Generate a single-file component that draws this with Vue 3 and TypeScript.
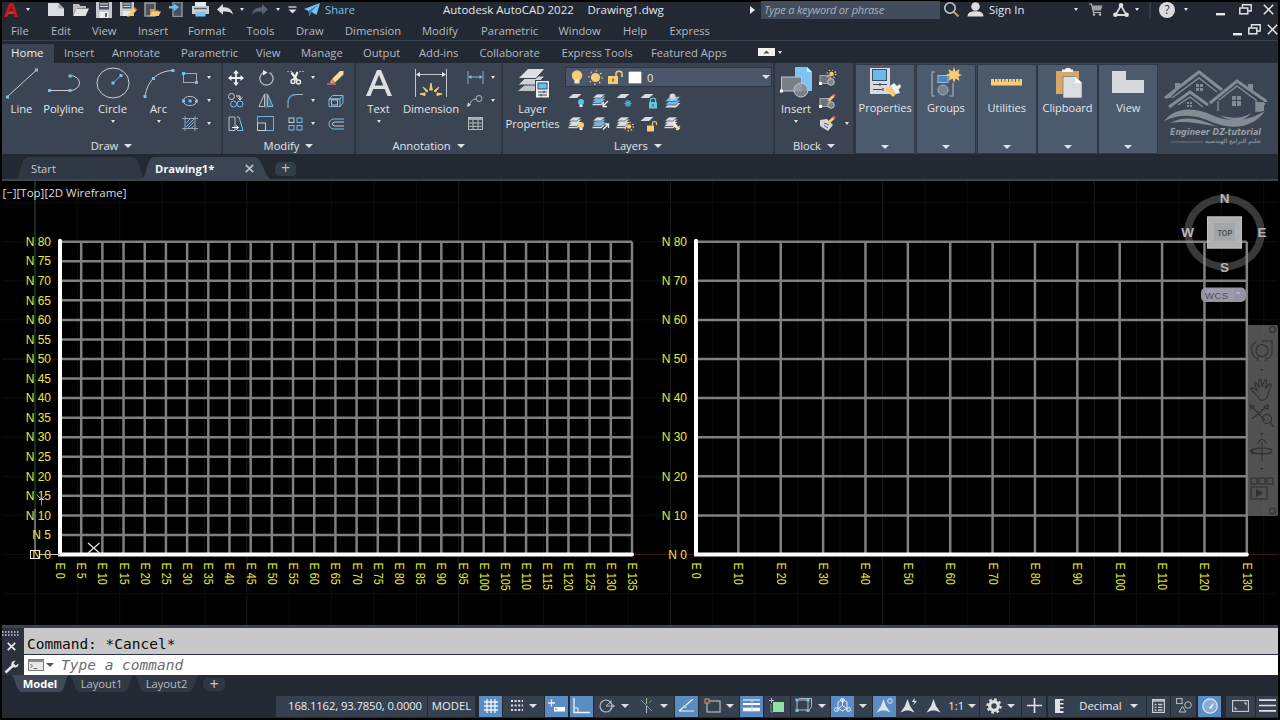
<script setup lang="ts">
import { computed } from "vue";

interface Cell {
	icon?: string;
	text?: string;
	w: number;
	gap?: number;
	caret?: boolean;
	on?: boolean;
}

// [width, height, markup]
type Icon = [number, number, string];

const BLUE = "#79bde8";
const LIGHT = "#d9dbde";
const GOLD = "#f8cb74";

const dot = (x: number, y: number, c = BLUE) => `<rect x="${x - 1.5}" y="${y - 1.5}" width="3" height="3" fill="${c}"/>`;
const sheet = (y: number, c = LIGHT) => `<path d="M5 ${y}H13.5L9 ${y + 4}H.5Z" fill="${c}"/>`;
const sheets = (c = LIGHT) => sheet(6, c) + sheet(3.5, c) + `<path d="M5 1H13.5L9 5H.5Z" fill="${LIGHT}" stroke="#3b4453" stroke-width=".6"/><path d="M.5 11.5H9L12 9" fill="none" stroke="${LIGHT}" stroke-width="1.4"/>`;
const bulb = (x: number, y: number, c: string) => `<circle cx="${x}" cy="${y}" r="3" fill="${c}"/><rect x="${x - 1.5}" y="${y + 2.5}" width="3" height="2.5" fill="#f2f2f2"/>`;
const sun = (x: number, y: number, r: number) => `<circle cx="${x}" cy="${y}" r="${r}" fill="${GOLD}"/><circle cx="${x}" cy="${y}" r="${r + 2}" fill="none" stroke="${GOLD}" stroke-width="1.6" stroke-dasharray="1.2 ${((r + 2) * 0.785 - 1.2).toFixed(2)}"/>`;
const pencil = (x: number, y: number) => `<path d="M${x} ${y + 6}L${x + 5} ${y + 1}L${x + 7} ${y + 3}L${x + 2} ${y + 7.5}Z" fill="${GOLD}"/><path d="M${x + 5} ${y + 1}l1.5-1.3 2 2L${x + 7} ${y + 3}Z" fill="#e0604f"/>`;
const blockBase = `<rect x="1" y="5.5" width="10" height="8" fill="#6b727c" stroke="#a9adb3"/><circle cx="12" cy="12" r="3.3" fill="#7d838c" stroke="#c3c6ca"/>${dot(1.5, 13.5, "#fff")}`;
const compass = `<path d="M7.5 1L10 8L14.5 14.5L9.5 12.5H5.5L.5 14.5L5 8Z" fill="#dfe2e5"/>`;

const icons: Record<string, Icon> = {
	logo: [16, 16, `<path d="M0 15L5.2 1H9.5L14 15H10.6L9.6 12H4.7L3.4 15Z" fill="#c8171e"/><path d="M5.6 9.5L7.3 4.4L8.8 9.5Z" fill="#222933"/><path d="M0 15L6.5 9.5H9.6V12H5Z" fill="#ea2c30"/>`],
	doc: [16, 13, `<path d="M0 0H10.5L16 5.5V13H0Z" fill="#dcdde0"/><path d="M10.5 0V5.5H16Z" fill="#a3a7ad"/>`],
	folder: [17, 13, `<path d="M1 12V1H7L8.5 3H14V5H5Z" fill="#b9bcc1"/><path d="M1 13L4.5 5.5H17L13.5 13Z" fill="#e2e3e5"/>`],
	save: [16, 16, `<path d="M0 0H16V16H0Z" fill="#c5c8cc"/><rect x="3" width="10" height="7.5" fill="#4c545f"/><path d="M4 2H12M4 4.5H12" stroke="#dadcdf"/><rect x="3.5" y="10" width="9" height="6" fill="#f0f0f0"/><rect x="9" y="11" width="2" height="4" fill="#5b626c"/>`],
	saveas: [17, 16, `<path d="M0 0H14V14H0Z" fill="#c5c8cc"/><rect x="2.5" width="9" height="6.5" fill="#4c545f"/><path d="M3.5 2H10.5M3.5 4.5H10.5" stroke="#dadcdf"/><rect x="3" y="9" width="8" height="5" fill="#e8e8e8"/><path d="M7 15L9 11L14 6L16.5 8.5L11 14Z" fill="${GOLD}"/><path d="M14 6L15 5L17 7.5L16.5 8.5Z" fill="#e2654f"/>`],
	openweb: [17, 15, `<rect x="1" y="1" width="10" height="13" fill="#4a515d" stroke="#9b9fa7" stroke-width="1.5"/><path d="M6 14V7H10L11 8.5H15V14Z" fill="#c99b4d"/><path d="M6 14L8 9.5H17L14.5 14Z" fill="${GOLD}"/>`],
	saveweb: [14, 15, `<rect x="4" y="0" width="9" height="14.5" fill="#4a515d" stroke="#8d939c" stroke-width="1.5"/><path d="M0 4H5V1.5L10 5.3L5 9V6.6H0Z" fill="#6dbdf0"/>`],
	print: [17, 15, `<rect x="3" y="0" width="11" height="5" fill="#e5e6e8"/><rect y="4" width="17" height="8" fill="#c9ccd0"/><path d="M2 6.5H15" stroke="#59606b" stroke-width="1.4"/><rect x="3.5" y="9.5" width="10" height="5" fill="#7cc3f3"/>`],
	undo: [16, 11, `<path d="M0 5.5L6 0V3.3C11 3.3 15 5 16 10.5C13 7.5 11 7.3 6 7.5V10.8Z" fill="#dcdee1"/>`],
	redo: [16, 11, `<path d="M16 5.5L10 0V3.3C5 3.3 1 5 0 10.5C3 7.5 5 7.3 10 7.5V10.8Z" fill="#5a626e"/>`],
	custom: [9, 8, `<path d="M.5 1H8.5" stroke="#dcdee1" stroke-width="1.3"/><path d="M.5 3.5H8.5L4.5 7.5Z" fill="#dcdee1"/>`],
	plane: [16, 13, `<path d="M0 6L16 0L12.5 12L7.5 9L5.5 13L4.5 8Z" fill="#77c0f0"/><path d="M4.5 8L14 1.5L7.2 9L5.5 13" fill="#337fb5"/>`],
	play: [5, 8, `<path d="M0 0L5 4L0 8Z" fill="#e8eaec"/>`],
	search: [16, 15, `<circle cx="6" cy="6" r="5.2" fill="none" stroke="#c2c6cb" stroke-width="1.6"/><path d="M10 10L14.5 14.5" stroke="#c4a16a" stroke-width="2"/>`],
	user: [17, 15, `<circle cx="8.5" cy="4.5" r="4.3" fill="#dcdde0"/><path d="M.5 14.5C.5 10.5 4 9.3 8.5 9.3S16.5 10.5 16.5 14.5Z" fill="#dcdde0"/>`],
	cart: [14, 13, `<path d="M0 1H2.5L4.5 9.5H12" fill="none" stroke="#b9bdc3" stroke-width="1.2"/><path d="M3 2.5H13.5L12 7.5H4.3Z" fill="#9ba0a8"/><circle cx="5" cy="11.5" r="1.2" fill="#b9bdc3"/><circle cx="11" cy="11.5" r="1.2" fill="#b9bdc3"/>`],
	triangle: [16, 14, `<path d="M8 2.5L2.5 12H13.5Z" fill="none" stroke="#d6d8dc" stroke-width="1.8"/><circle cx="8" cy="2.2" r="2.2" fill="#e0e2e4"/><circle cx="2.3" cy="11.7" r="2.2" fill="#e0e2e4"/><circle cx="13.7" cy="11.7" r="2.2" fill="#e0e2e4"/>`],
	rule: [2, 16, `<path d="M1 0V16" stroke="#46505f"/>`],
	help: [16, 16, `<circle cx="8" cy="8" r="8" fill="#d9dbde"/><text x="8" y="12" text-anchor="middle" font-family="Open Sans, sans-serif" font-size="12" fill="#2a323e">?</text>`],
	min: [9, 12, `<rect y="9" width="9" height="2.4" fill="#e8eaec"/>`],
	restore: [13, 11, `<path d="M3.5 3.5V.8H12.2V7H9" fill="none" stroke="#e2e4e7" stroke-width="1.4"/><rect x=".8" y="4" width="8" height="5.8" fill="none" stroke="#e2e4e7" stroke-width="1.5"/>`],
	close: [11, 11, `<path d="M.8 .8L10.2 10.2M10.2 .8L.8 10.2" stroke="#e8eaec" stroke-width="1.5"/>`],
	gallery: [17, 8, `<rect width="17" height="8" fill="#f2f2f2"/><path d="M5.5 5.5L8.5 2.5L11.5 5.5Z" fill="#444b57"/>`],

	line: [34, 34, `<path d="M2 31L31.5 4" stroke="#c9ccd1"/>${dot(2.5, 31)}${dot(31.5, 4)}`],
	polyline: [34, 34, `<path d="M2 24.5H23A9.5 7.5 0 0 0 23 9.5" fill="none" stroke="#c9ccd1"/>${dot(2.5, 24.5)}${dot(23, 24.5)}${dot(23, 10)}`],
	circle: [34, 34, `<ellipse cx="17" cy="17" rx="16" ry="15" fill="none" stroke="#c9ccd1"/><path d="M17 17L25 9.5" stroke="#6fb1e0"/>${dot(17, 17)}${dot(25, 9.5)}`],
	arc: [34, 34, `<path d="M3 31C5 16 14 5 31 4.5" fill="none" stroke="#c9ccd1"/>${dot(3, 30.5)}${dot(11.5, 12.5)}${dot(31, 4.5)}`],
	rect: [16, 12, `<rect x="1.5" y="1.5" width="13" height="9" fill="none" stroke="#a5a9b0"/>${dot(1.5, 1.5)}${dot(14.5, 10.5)}`],
	ellipse: [16, 12, `<ellipse cx="8" cy="6" rx="6.8" ry="4.6" fill="none" stroke="#b9bdc3"/>${dot(8, 6)}${dot(1.5, 6)}${dot(14.5, 6)}`],
	hatch: [16, 15, `<path d="M3 0V15M13 0V15M0 2.5H16M0 12.5H16" stroke="#9ba1aa"/><path d="M4 7L8 3M4 11L12 3M6 12L12 6M9.5 12L12 9.5" stroke="${BLUE}"/>`],
	move: [16, 16, `<path d="M8 0L11 3.5H8.9V7.1H12.5V5L16 8L12.5 11V8.9H8.9V12.5H11L8 16L5 12.5H7.1V8.9H3.5V11L0 8L3.5 5V7.1H7.1V3.5H5Z" fill="#eef0f1"/>`],
	rotate: [16, 16, `<path d="M5 2.8A6.6 6.6 0 1 0 11.5 2.6" fill="none" stroke="#bfc3c8" stroke-width="1.2"/><path d="M5 0V5.5L9.5 2.5Z" fill="#eef0f1"/>`],
	trim: [17, 15, `<path d="M0 1.5H5M12 1.5H17" stroke="#9ba1aa" stroke-dasharray="2 1"/><path d="M4.5 2.5L10 10M10.5 2L8 8L6.5 9.5" stroke="#eef0f1" stroke-width="2.2" fill="none"/><circle cx="6" cy="11.5" r="2" fill="none" stroke="#eef0f1" stroke-width="1.4"/><circle cx="11.5" cy="12" r="2" fill="none" stroke="#eef0f1" stroke-width="1.4"/>`],
	erase: [17, 15, `<path d="M5 9L13 1L16.5 1V4.5L8 12.5Z" fill="#fbdb98"/><path d="M5 9L8 12.5L5.5 13.5L2.5 12.5Z" fill="#f08b7c"/><path d="M0 14H9" stroke="#ef8f7e"/>`],
	copy: [16, 15, `<circle cx="3.5" cy="3.5" r="3" fill="none" stroke="#c9ccd1"/><circle cx="5.5" cy="11" r="3" fill="none" stroke="${BLUE}"/><circle cx="12" cy="11" r="3" fill="none" stroke="${BLUE}"/><path d="M8 3H12V6M10 4.5L12 7L14 4.5" fill="none" stroke="#eee"/>`],
	mirror: [16, 15, `<path d="M6.5 1V13.5H1Z" fill="none" stroke="#b9bdc3"/><path d="M9.5 1V13.5H15Z" fill="#456a8a" stroke="${BLUE}"/><path d="M8 0V15" stroke="#8f959d"/>`],
	fillet: [16, 15, `<path d="M1 15V10C1 4 5 1.5 9 1.5H16" fill="none" stroke="#aeb2b9"/><path d="M1 9C1.5 4 5 1.5 9 1.5" fill="none" stroke="#5e9bca" stroke-width="1.3"/>`],
	explode: [16, 14, `<path d="M1 5L4.5 1.5H15L12 5ZM12 5V12.5M15 1.5V9L12 12.5H1V5H12" fill="none" stroke="${BLUE}"/><rect x="3.5" y="6" width="6" height="5" fill="none" stroke="#b9bdc3"/>`],
	stretch: [16, 16, `<path d="M1 1H7V14.5H1Z" fill="none" stroke="#b9bdc3"/><path d="M9 1H11L15 14.5H9" fill="none" stroke="${BLUE}"/><path d="M4 11.5H10M8 9.5L10.5 11.5L8 13.5" stroke="#fff" fill="none"/>`],
	scale: [17, 15, `<rect x=".5" y=".5" width="16" height="14" fill="none" stroke="#6faed9"/><rect x=".5" y="7" width="8" height="7.5" fill="none" stroke="#c9ccd1"/>`],
	array: [15, 14, `<rect x="1" y="1" width="5" height="4.5" fill="none" stroke="#c9ccd1"/><rect x="9" y="1" width="5" height="4.5" fill="none" stroke="${BLUE}"/><rect x="1" y="8.5" width="5" height="4.5" fill="none" stroke="${BLUE}"/><rect x="9" y="8.5" width="5" height="4.5" fill="none" stroke="${BLUE}"/>`],
	offset: [16, 12, `<path d="M16 1H6A5 5 0 0 0 6 11H16" fill="none" stroke="${BLUE}"/><path d="M16 4H6.5A2 2 0 0 0 6.5 8H16" fill="none" stroke="#c9ccd1"/>`],
	bigText: [28, 34, `<path d="M1 30L12 4H16L27 30H22.5L19.6 23H8.2L5.5 30ZM9.7 19.5H18.2L14 9Z" fill="#dcdee1" fill-rule="evenodd"/>`],
	dimension: [34, 34, `<path d="M1.5 3V31M32.5 3V31" stroke="#c2c5ca"/><path d="M3 8.5H31" stroke="#c2c5ca"/><path d="M2 8.5L6 6V11ZM32 8.5L28 6V11Z" fill="#e6e7e9"/><path d="M6 28L11 29.5V27ZM9 21L14 25L12.5 26ZM17 17L15.7 24H18.3ZM25 21L20 25L21.5 26ZM28 28L23 29.5V27Z" fill="${GOLD}" stroke="${GOLD}"/>`],
	linear: [17, 13, `<path d="M1 0V13M16 0V13" stroke="#9fa5ad"/><path d="M2 6H15" stroke="${BLUE}"/><path d="M1.5 6L4.5 4V8ZM15.5 6L12.5 4V8Z" fill="${BLUE}"/>`],
	leader: [16, 12, `<circle cx="12" cy="3.5" r="3" fill="none" stroke="#b5b9bf"/><path d="M9 4C6 4 5 5 2 10" fill="none" stroke="#b5b9bf"/><path d="M0 12L1 7.5L4 10Z" fill="#dcdee1"/>`],
	table: [15, 13, `<rect x=".5" y=".5" width="14" height="12" fill="none" stroke="#b5b9bf"/><rect x="1" y="1" width="13" height="2" fill="#a3a8af"/><path d="M1 6H14M1 9.3H14M5 3V12M10 3V12" stroke="#b5b9bf"/>`],
	layerProps: [36, 34, `<path d="M12 17H30L21 25H3Z" fill="#bfc2c7"/><path d="M12 10H30L21 19H3Z" fill="#cfd1d5" stroke="#3b4453"/><path d="M13 2.5H30L21 12.5H3Z" fill="#dddfe1" stroke="#3b4453"/><rect x="20.5" y="14.5" width="14" height="17.5" fill="#eceded" stroke="#3b4453"/><rect x="23" y="17" width="9" height="6" fill="#6cb9ee" stroke="#35516b"/><path d="M23 26H32M23 29H32M29 24.8V27.3M26 27.8V30.3" stroke="#3b4453"/>`],
	bulb: [12, 15, `<circle cx="6" cy="5.5" r="5.2" fill="${GOLD}"/><path d="M3.5 9.5H8.5V13.5H3.5Z" fill="#f4ead2"/>`],
	sun: [15, 15, sun(7.5, 7.5, 4.6)],
	unlock: [15, 14, `<rect y="6" width="10" height="8" fill="${GOLD}"/><path d="M8 6V3.5C8 .5 14 .5 14 3.5V7" fill="none" stroke="${GOLD}" stroke-width="1.5"/><path d="M5 8.5V11.5" stroke="#4a4436" stroke-width="1.3"/>`],
	swatch: [14, 13, `<rect width="14" height="13" fill="#fff" stroke="#222"/>`],
	layOff: [18, 16, sheet(1) + bulb(13, 9, "#58c5d8")],
	layIso: [18, 16, sheets("#70b6e6") + `<path d="M16 8L11 13M11 9.5V13.5H15" stroke="#e8eef2" stroke-width="1.3" fill="none"/>`],
	layFreeze: [18, 16, sheet(1) + `<path d="M12 7V14M8.5 10.5H15.5M9.5 8L14.5 13M14.5 8L9.5 13" stroke="#45b4bd" stroke-width="1.3"/>`],
	layLock: [18, 16, sheet(1) + `<rect x="9" y="9" width="8" height="6.5" fill="#62c8d8"/><path d="M10.5 9V7C10.5 4.5 15.5 4.5 15.5 7V9" fill="none" stroke="#62c8d8" stroke-width="1.3"/><path d="M13 11V13.5" stroke="#2c5862"/>`],
	layMatch: [18, 16, `<path d="M6 10H16.5L12 14.5H1Z" fill="#dadcdf"/><path d="M6 7H16.5L12 12H1Z" fill="#70b6e6" stroke="#3b4453" stroke-width=".6"/><path d="M6 3.5H16.5L12 8.5H1Z" fill="#8ac4ee" stroke="#3b4453" stroke-width=".6"/><circle cx="8.5" cy="3.5" r="3" fill="#d5d8dc"/>`],
	layOn: [18, 16, sheets() + bulb(13, 9, GOLD)],
	layUniso: [18, 16, sheets("#70b6e6") + `<path d="M11 13.5L16 8.5M12.5 8H16.5V12" stroke="#e8eef2" stroke-width="1.3" fill="none"/>`],
	layThaw: [18, 16, sheets() + sun(13, 10.5, 2.3)],
	layUnlock: [18, 16, sheet(1) + `<rect x="7" y="9.5" width="7" height="6" fill="${GOLD}"/><path d="M12.5 9.5V7C12.5 5 16.5 5 16.5 7V9" fill="none" stroke="${GOLD}" stroke-width="1.2"/>`],
	layPrev: [18, 16, sheets() + `<path d="M9 7L15 13.5" stroke="#f4ead2" stroke-width="3"/><path d="M12 14L16 10" stroke="${GOLD}" stroke-width="1.5"/>`],
	insert: [34, 34, `<path d="M16 1H28L33 6V25H16Z" fill="#7cc4f6"/><path d="M28 1V6H33Z" fill="#d5ebfa"/><rect x="2.5" y="11" width="20" height="14" fill="#7a7f87" stroke="#c2c4c8"/><circle cx="22" cy="24" r="7" fill="#858a92" fill-opacity=".85" stroke="#c9cbcf"/><path d="M15 24A7 7 0 0 1 22.5 17V25H15Z" fill="#a3a7ac" opacity=".6"/>${dot(2.5, 25, "#fff")}`],
	blkNew: [18, 16, blockBase + sun(12.5, 4, 2.2)],
	blkEdit: [18, 16, blockBase + pencil(8.5, 1)],
	blkAttr: [18, 16, `<path d="M1 4L8 3L14 9L9 15L1 10Z" fill="#d4d6da"/><path d="M5 7L10 9M5 9.5L9 12" stroke="#555c67"/>${pencil(8.5, 0)}`],
	properties: [34, 34, `<rect x="2" y="2" width="20" height="26" fill="#d9dadd"/><rect x="4.5" y="3.5" width="14" height="11" fill="#6eb8ec" stroke="#35516b"/><path d="M5 18.5H19M5 23.5H14M12 17V20M15 22V25" stroke="#454c57" stroke-width="1.2"/><path d="M17 23L22 20L28 28L25 31Z" fill="${GOLD}"/><path d="M22 20L26 17L29 20L32 18L33 21L30.5 23.5L32 27L28 28Z" fill="#f0f0f0"/>`],
	groups: [34, 34, `<path d="M6 6H3V30H6M20 30H24V17" fill="none" stroke="#a9aeb5" stroke-width="1.2"/><rect x="9" y="9.5" width="10" height="7" fill="#4a86b8" stroke="#8cc0e6"/><circle cx="14" cy="24" r="5" fill="#79808a" stroke="#a9aeb5"/><path d="M25 1L26.5 5.5L30.5 3L29.5 7.5L33 9L29.5 10.5L30.5 15L26.5 12.5L25 17L23.5 12.5L19.5 15L20.5 10.5L16.5 9L20.5 7.5L19.5 3L23.5 5.5Z" fill="${GOLD}"/>`],
	utilities: [34, 34, `<rect x="1" y="13" width="31" height="6.5" fill="#f6cf7d"/><path d="M4.5 13V16M8 13V15.5M11.5 13V16M15 13V15.5M18.5 13V16M22 13V15.5M25.5 13V16M29 13V15.5" stroke="#74623c"/>`],
	clipboard: [34, 34, `<rect x="5" y="5" width="23" height="23" fill="#d9a869"/><path d="M11 5V3.5H14C14 1.5 20 1.5 20 3.5H22V6H11Z" fill="#f3f3f3"/><path d="M12 10.5H24L31 17V32H12Z" fill="#dcdddf" stroke="#5b6676" stroke-width=".6"/><path d="M24 10.5V17H31Z" fill="#fff"/>`],
	view: [34, 34, `<path d="M1 5H15V14H33V27H1Z" fill="#d8d9dc"/>`],

	prompt: [16, 12, `<rect x=".5" y=".5" width="15" height="11" fill="#e7e7e7" stroke="#7b7b7b"/><rect x="1" y="1" width="14" height="2" fill="#8a8a8a"/><path d="M2.5 5L4.5 7L2.5 9M5.5 9.5H9" fill="none" stroke="#666"/>`],
	grip: [18, 5, `<path d="M0 1H18M0 4H18" stroke="#cfd2d6" stroke-width="1.5" stroke-dasharray="1.5 1.5"/>`],
	xmark: [9, 9, `<path d="M.8 .8L8.2 8.2M8.2 .8L.8 8.2" stroke="#e4e6e8" stroke-width="1.8"/>`],
	wrench: [15, 14, `<path d="M1.5 12.5L8.5 6" stroke="#e4e6e8" stroke-width="2.6"/><path d="M11.5 .8L9.5 3.5L11.8 5.5L14.5 3.5C14.8 6.5 12 8.5 9.2 7.2L7.5 5.5C6.5 2.8 9 .3 11.5 .8Z" fill="#e4e6e8"/>`],

	grid: [16, 16, `<path d="M4 1V15M8 1V15M12 1V15M1 4H15M1 8H15M1 12H15" stroke="#f0f4f8" stroke-width="1.3"/>`],
	snap: [13, 13, `<path d="M1 2H13M1 6.5H13M1 11H13" stroke="#e0e3e6" stroke-width="2" stroke-dasharray="2 1.6"/>`],
	dyn: [17, 14, `<path d="M0 4H7M3.5 .5V7.5" stroke="#e8f0f7" stroke-width="1.3"/><rect x="6" y="8" width="11" height="4.5" fill="#fff"/><path d="M7 10.2H9.5" stroke="#5b8dc0"/>`],
	ortho: [17, 16, `<path d="M1 0V14.5H17" fill="none" stroke="#f0f4f8" stroke-width="1.3"/><path d="M1 10H5V14" fill="none" stroke="#f0f4f8"/>`],
	polar: [17, 14, `<circle cx="7" cy="7" r="6" fill="none" stroke="#b5b9bf" stroke-width="1.2"/><path d="M7 7L13 1.5M7 7H16M11 4L15 7L11 10" fill="none" stroke="#b5b9bf"/>`],
	iso: [13, 15, `<path d="M6.5 15V7.5" stroke="#b5b9bf"/><path d="M1 2L12 13" stroke="#8e949c"/><path d="M6.5 0V6" stroke="#88b890"/><path d="M9 5L12 2" stroke="#b66"/>`],
	otrack: [17, 13, `<path d="M1 12L15 0M1 12H16" stroke="#f0f4f8" stroke-width="1.2"/><rect x="5.5" y="6" width="3" height="3" fill="#9fe0b0"/>`],
	osnap: [17, 15, `<rect x="3" y="3" width="13" height="11" fill="none" stroke="#b5b9bf" stroke-width="1.2"/><rect x="1" y="1" width="4" height="4" fill="#37414f" stroke="#d99a70"/>`],
	lwt: [17, 13, `<path d="M0 1H17" stroke="#fff"/><path d="M0 5H17" stroke="#fff" stroke-width="2"/><path d="M0 10.5H17" stroke="#fff" stroke-width="3.5"/><path d="M9 0V13" stroke="#b6d0ea"/>`],
	transp: [16, 15, `<path d="M0 2.5H5M2.5 0V5" stroke="#b5b9bf"/><rect x="4" y="4" width="11" height="10" fill="#8fe0a4"/><path d="M4 14H2V6" stroke="#5ea673" fill="none"/>`],
	select: [18, 15, `<rect x="2" y="2" width="11" height="10" fill="none" stroke="#b5b9bf"/><path d="M4 .5H16.5V9L14 12" fill="none" stroke="#b5b9bf"/>${dot(2, 2)}${dot(13, 2)}${dot(2, 12.5)}${dot(13, 12.5)}`],
	gizmo: [17, 15, `<path d="M8.5 1V7.5L14.5 12M8.5 7.5L2.5 12M4 4L8.5 1.5L13 4V10L8.5 13L4 10Z" fill="none" stroke="#e4eef7"/><circle cx="2.5" cy="11.5" r="2" fill="none" stroke="#e4eef7"/><circle cx="14.5" cy="11.5" r="2" fill="none" stroke="#e4eef7"/><circle cx="8.5" cy="2" r="1.8" fill="none" stroke="#e4eef7"/>`],
	annoVis: [17, 16, compass + `<circle cx="14" cy="3" r="2.3" fill="none" stroke="#dfe9f2"/>`],
	annoAuto: [17, 16, compass + `<path d="M14.5 0L12 4H14.5L13 7.5L17 3H14.5Z" fill="#e4e6e8"/>`],
	anno: [15, 16, compass],
	gear: [16, 16, `<circle cx="8" cy="8" r="4.3" fill="none" stroke="#dfe2e5" stroke-width="3.2"/><circle cx="8" cy="8" r="6.6" fill="none" stroke="#dfe2e5" stroke-width="2.2" stroke-dasharray="2.6 2.58"/>`],
	plus: [15, 15, `<path d="M7.5 0V15M0 7.5H15" stroke="#e0e3e6" stroke-width="1.6"/>`],
	ruler: [9, 14, `<path d="M0 0H8.5V1.5H5V4H8.5V5.5H5V8H8.5V9.5H5V12H8.5V14H0Z" fill="#dfe1e4"/>`],
	quick: [13, 14, `<rect x=".6" y=".6" width="11.8" height="12.8" fill="none" stroke="#c9ccd1" stroke-width="1.2"/><path d="M.5 2H12.5" stroke="#c9ccd1" stroke-width="1.5"/><path d="M2.5 5.5H4.5M6 5.5H10.5M2.5 8.3H4.5M6 8.3H10.5M2.5 11H4.5M6 11H10.5" stroke="#c9ccd1" stroke-width="1.3"/>`],
	shapes: [16, 15, `<rect x=".6" y=".6" width="5.5" height="5" fill="none" stroke="#b9bdc3"/><circle cx="12" cy="7" r="3.3" fill="none" stroke="#b9bdc3"/><path d="M3 14L6.5 8.5L10 14Z" fill="none" stroke="#b9bdc3"/>`],
	perf: [16, 16, `<circle cx="8" cy="8" r="7.2" fill="#86aed6" stroke="#dce9f5" stroke-width="1.2"/><path d="M7 9.5L12.5 4.5L9 11Z" fill="#fff"/>`],
	full: [17, 12, `<rect x=".6" y=".6" width="15.8" height="10.8" fill="none" stroke="#c9ccd1" stroke-width="1.1"/><path d="M2.5 9.5V6.5L5.5 9.5ZM14.5 2.5V5.5L11.5 2.5Z" fill="#c9ccd1"/>`],
	burger: [17, 13, `<path d="M0 1.2H17M0 6.5H17M0 11.8H17" stroke="#dfe2e5" stroke-width="1.7"/>`],
};

const qat: Cell[] = [
	{ icon: "logo", w: 19 }, { caret: true, w: 13 },
	{ icon: "doc", w: 24, gap: 10 }, { icon: "folder", w: 24 }, { icon: "save", w: 24 }, { icon: "saveas", w: 24 },
	{ icon: "openweb", w: 24 }, { icon: "saveweb", w: 24 }, { icon: "print", w: 24 },
	{ icon: "undo", w: 25 }, { caret: true, w: 10 }, { icon: "redo", w: 26 }, { caret: true, w: 10 },
	{ icon: "custom", w: 18 }, { icon: "plane", w: 21 },
];

const titleRight: Cell[] = [
	{ caret: true, w: 11 }, { icon: "cart", w: 30 }, { icon: "triangle", w: 20 }, { caret: true, w: 12 },
	{ icon: "rule", w: 14 }, { icon: "help", w: 20 }, { caret: true, w: 18 },
	{ icon: "min", w: 30, gap: 10 }, { icon: "restore", w: 20 }, { icon: "close", w: 20, gap: 3 },
];

const menus: [string, number][] = [
	["File", 40], ["Edit", 41], ["View", 46], ["Insert", 50], ["Format", 58.5], ["Tools", 49.5], ["Draw", 49],
	["Dimension", 77], ["Modify", 59], ["Parametric", 77.5], ["Window", 64.5], ["Help", 46.5], ["Express", 60],
];

const ribbonTabs: [string, number][] = [
	["Insert", 48], ["Annotate", 69], ["Parametric", 75], ["View", 45], ["Manage", 62], ["Output", 56],
	["Add-ins", 60.5], ["Collaborate", 82], ["Express Tools", 89.5], ["Featured Apps", 106.5],
];

const drawBig: [string, string, number, boolean][] = [
	["line", "Line", 39, false], ["polyline", "Polyline", 45, false], ["circle", "Circle", 53, true], ["arc", "Arc", 39, true],
];
const drawSmall = ["rect", "ellipse", "hatch"];
const modifySmall = [
	["move", "rotate", "trim", "erase"],
	["copy", "mirror", "fillet", "explode"],
	["stretch", "scale", "array", "offset"],
];
const annoSmall = ["linear", "leader", "table"];
const layerRows = [
	["layOff", "layIso", "layFreeze", "layLock", "layMatch"],
	["layOn", "layUniso", "layThaw", "layUnlock", "layPrev"],
];
const blockSmall = ["blkNew", "blkEdit", "blkAttr"];
const collapsed = [
	["properties", "Properties"], ["groups", "Groups"], ["utilities", "Utilities"], ["clipboard", "Clipboard"], ["view", "View"],
];

const status: Cell[] = [
	{ text: "168.1162, 93.7850, 0.0000", w: 151 },
	{ text: "MODEL", w: 47, gap: 1 },
	{ icon: "grid", w: 23, gap: 4, on: true },
	{ icon: "snap", w: 41, caret: true, gap: 1 },
	{ icon: "dyn", w: 23, gap: 1, on: true },
	{ icon: "ortho", w: 23, gap: 2, on: true },
	{ icon: "polar", w: 40, caret: true, gap: 1 },
	{ icon: "iso", w: 40, caret: true },
	{ icon: "otrack", w: 23, on: true, gap: 1 },
	{ icon: "osnap", w: 40, caret: true, gap: 1 },
	{ icon: "lwt", w: 23, gap: 1, on: true },
	{ icon: "transp", w: 26, gap: 1 },
	{ icon: "select", w: 39, caret: true, gap: 1 },
	{ icon: "gizmo", w: 23, gap: 1, on: true },
	{ caret: true, w: 18 },
	{ icon: "annoVis", w: 23, gap: 1, on: true },
	{ icon: "annoAuto", w: 25 },
	{ icon: "anno", w: 24 },
	{ text: "1:1", caret: true, w: 34 },
	{ icon: "gear", caret: true, w: 41, gap: 1 },
	{ icon: "plus", w: 24, gap: 1 },
	{ icon: "ruler", w: 23, gap: 2 },
	{ text: "Decimal", caret: true, w: 75 },
	{ icon: "quick", w: 23, gap: 1 },
	{ icon: "shapes", w: 25, gap: 1 },
	{ icon: "perf", w: 23, gap: 2, on: true },
	{ icon: "full", w: 29, gap: 5 },
	{ icon: "burger", w: 22, gap: 1 },
];

// model space
const X_AXIS = 554.5;
const range = (n: number) => Array.from({ length: n + 1 }, (_, i) => i);
const bgX = range(29).map((i) => ({ x: 35 + i * 42.37, major: i % 5 === 0 }));
const bgY = range(10).map((i) => ({ y: 593.6 - i * 39.1, major: i === 6 }));

const plots = computed(() => [
	{ x0: 60, dx: 21.185, nx: 27, dy: 19.55, ny: 16, step: 5 },
	{ x0: 696, dx: 42.37, nx: 13, dy: 39.1, ny: 8, step: 10 },
].map((p) => ({
	...p,
	x1: p.x0 + p.dx * p.nx,
	y1: X_AXIS - p.dy * p.ny,
	cols: range(p.nx).map((i) => ({ x: p.x0 + i * p.dx, label: `E ${i * p.step}` })),
	rows: range(p.ny).map((i) => ({ y: X_AXIS - i * p.dy, label: `N ${i * p.step}` })),
})));
</script>

<template>
	<div class="screen">
		<header class="titlebar">
			<div class="qat">
				<span v-for="(c, i) in qat" :key="i" class="cell" :style="{ width: c.w + 'px', marginLeft: (c.gap ?? 0) + 'px' }">
					<svg v-if="c.icon" :width="icons[c.icon][0]" :height="icons[c.icon][1]" v-html="icons[c.icon][2]" />
					<i v-else class="caret" />
				</span>
				<span class="share">Share</span>
			</div>
			<span class="app-name">Autodesk AutoCAD 2022</span>
			<span class="file-name">Drawing1.dwg</span>
			<svg class="play" width="5" height="8" v-html="icons.play[2]" />
			<div class="search">Type a keyword or phrase</div>
			<span class="cell find"><svg width="16" height="15" v-html="icons.search[2]" /></span>
			<span class="cell person"><svg width="17" height="15" v-html="icons.user[2]" /></span>
			<span class="signin">Sign In</span>
			<span v-for="(c, i) in titleRight" :key="i" class="cell" :style="{ width: c.w + 'px', marginLeft: (c.gap ?? 0) + 'px' }">
				<svg v-if="c.icon" :width="icons[c.icon][0]" :height="icons[c.icon][1]" v-html="icons[c.icon][2]" />
				<i v-else class="caret" />
			</span>
		</header>

		<nav class="menubar">
			<span v-for="[label, w] in menus" :key="label" :style="{ width: w + 'px' }">{{ label }}</span>
			<div class="doc-controls">
				<svg width="9" height="12" v-html="icons.min[2]" />
				<svg width="13" height="11" v-html="icons.restore[2]" />
				<svg width="11" height="11" v-html="icons.close[2]" />
			</div>
		</nav>

		<nav class="ribbon-tabs">
			<span class="home">Home</span>
			<span v-for="[label, w] in ribbonTabs" :key="label" :style="{ width: w + 'px' }">{{ label }}</span>
			<svg width="17" height="8" v-html="icons.gallery[2]" />
			<i class="caret" />
		</nav>

		<section class="ribbon">
			<div class="panel draw">
				<div class="body">
					<div v-for="[icon, label, w, more] in drawBig" :key="icon" class="big" :style="{ width: w + 'px' }">
						<svg width="34" height="34" v-html="icons[icon][2]" />
						<span>{{ label }}</span>
						<i v-if="more" class="caret" />
					</div>
					<div class="small-col">
						<div v-for="name in drawSmall" :key="name" class="small">
							<span class="cell"><svg :width="icons[name][0]" :height="icons[name][1]" v-html="icons[name][2]" /></span>
							<i class="caret" />
						</div>
					</div>
				</div>
				<footer>Draw <i class="caret wide" /></footer>
			</div>

			<div class="panel modify">
				<div class="body tools">
					<div v-for="(row, r) in modifySmall" :key="r" class="row">
						<template v-for="(name, c) in row" :key="name">
							<span class="cell"><svg :width="icons[name][0]" :height="icons[name][1]" v-html="icons[name][2]" /></span>
							<i v-if="c === 2" class="caret" />
						</template>
					</div>
				</div>
				<footer>Modify <i class="caret wide" /></footer>
			</div>

			<div class="panel annotation">
				<div class="body">
					<div class="big text-tool">
						<svg width="28" height="34" v-html="icons.bigText[2]" />
						<span>Text</span>
						<i class="caret" />
					</div>
					<div class="big dim-tool">
						<svg width="34" height="34" v-html="icons.dimension[2]" />
						<span>Dimension</span>
					</div>
					<div class="small-col">
						<div v-for="(name, i) in annoSmall" :key="name" class="small">
							<span class="cell"><svg :width="icons[name][0]" :height="icons[name][1]" v-html="icons[name][2]" /></span>
							<i v-if="i < 2" class="caret" />
						</div>
					</div>
				</div>
				<footer>Annotation <i class="caret wide" /></footer>
			</div>

			<div class="panel layers">
				<div class="body">
					<div class="big layer-tool">
						<svg width="36" height="34" v-html="icons.layerProps[2]" />
						<span>Layer<br>Properties</span>
					</div>
					<div class="layer-side">
						<div class="layer-select">
							<svg v-for="name in ['bulb', 'sun', 'unlock', 'swatch']" :key="name" :width="icons[name][0]" :height="icons[name][1]" v-html="icons[name][2]" />
							<span>0</span>
							<i class="caret wide" />
						</div>
						<div v-for="(row, r) in layerRows" :key="r" class="layer-row">
							<span v-for="name in row" :key="name" class="cell"><svg width="18" height="16" v-html="icons[name][2]" /></span>
						</div>
					</div>
				</div>
				<footer>Layers <i class="caret wide" /></footer>
			</div>

			<div class="panel block">
				<div class="body">
					<div class="big insert-tool">
						<svg width="34" height="34" v-html="icons.insert[2]" />
						<span>Insert</span>
						<i class="caret" />
					</div>
					<div class="small-col">
						<div v-for="(name, i) in blockSmall" :key="name" class="small">
							<span class="cell"><svg width="18" height="16" v-html="icons[name][2]" /></span>
							<i v-if="i === 2" class="caret" />
						</div>
					</div>
				</div>
				<footer>Block <i class="caret wide" /></footer>
			</div>

			<div class="folded-list">
				<div v-for="[icon, label] in collapsed" :key="icon" class="folded">
					<svg width="34" height="34" v-html="icons[icon][2]" />
					<span>{{ label }}</span>
					<i class="caret wide" />
				</div>
			</div>

			<svg class="brand" width="120" height="91" viewBox="1158 63 120 91">
				<g fill="none" stroke="#858b95" stroke-width="3">
					<path d="M1165 98L1199 72L1222 90" />
					<path d="M1169 107L1190 92L1208 105" />
					<path d="M1210 103L1237 81L1266 101" />
				</g>
				<g fill="none" stroke="#858b95" stroke-width="1.4">
					<path d="M1172 98L1199 78L1217 92M1178 105L1190 97L1203 107M1218 101V111M1219 100L1237 86L1256 100V111H1261L1265 103" />
				</g>
				<path d="M1164 98L1175 90V83H1180V87L1170 98ZM1248 84H1253V93L1248 89ZM1256 102H1268L1264 99V111H1256Z" fill="#858b95" />
				<path d="M1196 84H1199V87H1196ZM1200 84H1203V87H1200ZM1196 88H1199V91H1196ZM1200 88H1203V91H1200ZM1187 102H1189V104H1187ZM1190 102H1192V104H1190ZM1187 105H1189V107H1187ZM1190 105H1192V107H1190ZM1232 96H1236V100H1232ZM1237 96H1241V100H1237ZM1232 101H1236V106H1232ZM1237 101H1241V106H1237Z" fill="#858b95" />
				<path d="M1164 121C1176 106 1196 107 1214 116C1232 123 1248 121 1265 111C1252 129 1231 130 1212 122C1194 114 1180 114 1164 121Z" fill="#858b95" />
				<path d="M1170 123C1186 115 1199 119 1216 126C1200 124 1187 120 1170 123ZM1220 115C1230 119 1242 119 1251 113C1243 124 1230 122 1220 115Z" fill="#858b95" />
				<text x="1170" y="135" class="brand-name" textLength="91" lengthAdjust="spacingAndGlyphs">Engineer DZ-tutorial</text>
				<path d="M1171 142H1203" stroke="#7c828c" stroke-width=".8" />
				<text x="1205" y="142.5" class="brand-sub" textLength="56" lengthAdjust="spacingAndGlyphs">تعليم البرامج الهندسية</text>
			</svg>
		</section>

		<nav class="file-tabs">
			<div class="file-tab start">Start</div>
			<div class="file-tab current"><b>Drawing1*</b><svg width="9" height="9" v-html="icons.xmark[2]" /></div>
			<div class="new-tab">+</div>
		</nav>

		<svg class="model" width="1276" height="444" viewBox="2 181 1276 444">
			<rect x="2" y="181" width="1276" height="444" fill="#000" />
			<line v-for="l in bgX" :key="'x' + l.x" :x1="l.x" :x2="l.x" y1="181" y2="625" :class="l.major ? 'major' : 'minor'" />
			<line v-for="l in bgY" :key="'y' + l.y" x1="2" x2="1278" :y1="l.y" :y2="l.y" :class="l.major ? 'major' : 'minor'" />
			<line x1="35" x2="35" y1="181" y2="510" stroke="#1f4420" stroke-width="1.2" />
			<line x1="630" x2="1278" y1="554.5" y2="554.5" stroke="#401616" />

			<g v-for="p in plots" :key="p.x0">
				<line v-for="c in p.cols" :key="c.label" :x1="c.x" :x2="c.x" :y1="p.y1" :y2="X_AXIS" class="gridline" />
				<line v-for="r in p.rows" :key="r.label" :x1="p.x0" :x2="p.x1" :y1="r.y" :y2="r.y" class="gridline" />
				<path :d="`M${p.x0} ${p.y1 - 1}V${X_AXIS}H${p.x1}`" class="axis" />
				<text v-for="r in p.rows" :key="r.label + 't'" :x="p.x0 - 9" :y="r.y + 4.2" text-anchor="end" class="coord">{{ r.label }}</text>
				<text v-for="c in p.cols" :key="c.label + 't'" :transform="`translate(${c.x - 4} 562.5) rotate(90) scale(.9 1)`" class="coord">{{ c.label }}</text>
			</g>

			<!-- UCS icon -->
			<g fill="none" stroke="#c4c4c4">
				<path d="M35 550V509M39 554.5H60" />
				<rect x="30.5" y="550.5" width="9" height="8" stroke="#e6e6e6" />
				<path d="M36.5 494.5L41.5 499.5L46.5 494.5M41.5 499.5V505.5" stroke="#999" />
				<path d="M88 543L99.5 553M99.5 543L88 553" stroke="#e6e6e6" stroke-width="1.2" />
			</g>

			<text x="2.5" y="197" class="viewlabel" textLength="124" lengthAdjust="spacingAndGlyphs">[−][Top][2D Wireframe]</text>

			<!-- view cube -->
			<ellipse cx="1224.5" cy="232.5" rx="36.5" ry="34" fill="none" stroke="#888" stroke-opacity=".42" stroke-width="7.5" />
			<rect x="1207" y="216.5" width="35" height="32" fill="#b0b0b0" />
			<rect x="1207.5" y="217" width="34" height="31" fill="none" stroke="#c0c0c0" />
			<rect x="1214" y="223" width="21" height="18" fill="#a2a5aa" />
			<text x="1225" y="235.5" text-anchor="middle" class="cube-face" textLength="15" lengthAdjust="spacingAndGlyphs">TOP</text>
			<text x="1224.5" y="202.5" text-anchor="middle" class="wind">N</text>
			<text x="1224.5" y="272" text-anchor="middle" class="wind">S</text>
			<text x="1187.5" y="237" text-anchor="middle" class="wind">W</text>
			<text x="1262" y="237" text-anchor="middle" class="wind">E</text>
			<rect x="1201" y="287.5" width="45" height="14.5" rx="5" fill="#9494a3" />
			<rect x="1205" y="289" width="29" height="11" rx="2" fill="#9c9caa" />
			<text x="1205" y="298.5" class="wcs" textLength="23">WCS</text>
			<path d="M1236 293H1240" stroke="#c8c8d6" />

			<!-- navigation bar -->
			<rect x="1247" y="325" width="31" height="191" rx="2" fill="#777" fill-opacity=".68" />
			<g fill="none" stroke="#2f2f2f" stroke-width="1.1">
				<path d="M1262 341H1272V352C1272 355 1270 358 1267 359M1257 359C1250 354 1250 345 1256 342" />
				<circle cx="1262" cy="350.5" r="6" />
				<path d="M1258 357V361M1266 357V361" />
				<path d="M1258 397C1255 394 1253 391 1250.5 389C1251 387 1254 387.5 1257 391L1254.5 383C1255 381.5 1257 382 1259 388L1259 380C1260.5 378.5 1262 379.5 1262 387L1265 380C1267 379.5 1267 381 1265.5 388L1270 383.5C1272 384 1271.5 385 1269 391C1268 396 1266 400 1264 400H1260Z" />
				<path d="M1252 407L1265 420M1266 407L1252 419M1250 405L1254 406L1251 409ZM1268 405L1264 407L1268 409Z" />
				<circle cx="1267" cy="419" r="4.5" />
				<path d="M1270 422L1274 427" />
				<ellipse cx="1262" cy="451" rx="10" ry="3" />
				<path d="M1262 442V461M1258 444C1259 438 1265 438 1266 444M1253 449L1250 451L1253 454" />
				<rect x="1251" y="478" width="6" height="6" />
				<rect x="1259" y="478" width="6" height="6" />
				<rect x="1267" y="478" width="6" height="6" />
				<rect x="1251" y="487" width="16" height="12" />
				<circle cx="1272.5" cy="329.5" r="3" />
				<circle cx="1272.5" cy="511" r="3" />
			</g>
			<path d="M1256 489L1263 493L1256 497ZM1260 369H1264L1262 371ZM1260 433H1264L1262 435ZM1260 468H1264L1262 470Z" fill="#2f2f2f" />
		</svg>

		<section class="command">
			<div class="cmd-side">
				<svg width="18" height="5" v-html="icons.grip[2]" />
				<svg class="cmd-x" width="9" height="9" v-html="icons.xmark[2]" />
				<svg width="15" height="14" v-html="icons.wrench[2]" />
			</div>
			<div class="cmd-main">
				<div class="log">Command: *Cancel*</div>
				<div class="entry">
					<svg width="16" height="12" v-html="icons.prompt[2]" />
					<i class="caret wide" />
					<em>Type a command</em>
				</div>
			</div>
		</section>

		<nav class="layout-tabs">
			<div class="layout-tab active">Model</div>
			<div class="layout-tab">Layout1</div>
			<div class="layout-tab">Layout2</div>
			<div class="layout-tab add">+</div>
		</nav>

		<footer class="statusbar">
			<div
				v-for="(c, i) in status"
				:key="i"
				class="st"
				:class="{ on: c.on, first: i === 0 }"
				:style="{ width: c.w + 'px', marginLeft: (c.gap ?? 0) + 'px' }"
			>
				<svg v-if="c.icon" :width="icons[c.icon][0]" :height="icons[c.icon][1]" v-html="icons[c.icon][2]" />
				<span v-if="c.text">{{ c.text }}</span>
				<i v-if="c.caret" class="caret wide" />
			</div>
		</footer>
	</div>
</template>

<style>
body {
	background: #000;
}
</style>

<style scoped>
.screen {
	box-sizing: border-box;
	width: 1280px;
	height: 720px;
	padding: 2px;
	overflow: hidden;
	display: flex;
	flex-direction: column;
	background: #000;
	color: #c9cdd3;
	font-family: "Open Sans", "Noto Sans", sans-serif;
	font-size: 11.2px;
	white-space: nowrap;
}

svg {
	display: block;
	flex: none;
}

.cell {
	display: flex;
	flex: none;
	align-items: center;
	justify-content: center;
}

.caret {
	flex: none;
	width: 0;
	height: 0;
	border: 2.5px solid transparent;
	border-top: 3px solid #dfe2e5;
	border-bottom: 0;
}

.caret.wide {
	border-width: 4px 4px 0;
}

.titlebar {
	flex: none;
	display: flex;
	align-items: center;
	box-sizing: border-box;
	height: 17px;
	padding-bottom: 2px;
	background: #222933;
	color: #e4e6e9;
}

.qat {
	flex: none;
	display: flex;
	align-items: center;
	width: 441px;
}

.share {
	margin-left: 3px;
	color: #7cc0ec;
}

.app-name {
	flex: none;
	width: 144.5px;
	font-size: 11.5px;
}

.file-name {
	flex: none;
	width: 162.5px;
	font-size: 11.5px;
}

.play {
	margin-right: 6px;
}

.search {
	flex: none;
	box-sizing: border-box;
	width: 179px;
	height: 18px;
	padding-left: 3px;
	background: #434c5d;
	color: #a9b0bc;
	font-size: 11px;
	font-style: italic;
	letter-spacing: -0.2px;
	line-height: 17px;
}

.find {
	width: 23px;
}

.person {
	width: 24px;
}

.signin {
	flex: none;
	box-sizing: border-box;
	width: 83px;
	padding-left: 2px;
	font-size: 11.4px;
}

.menubar {
	flex: none;
	display: flex;
	align-items: center;
	box-sizing: border-box;
	height: 22px;
	padding: 1px 0 0 9px;
	border-bottom: 1px solid #39424f;
	background: #222933;
	color: #b6bac0;
}

.menubar > span {
	flex: none;
}

.doc-controls {
	display: flex;
	align-items: center;
	gap: 6px;
	margin: 0 0 1px auto;
}

.ribbon-tabs {
	flex: none;
	display: flex;
	align-items: center;
	height: 22px;
	background: #222933;
	color: #b6bac0;
}

.ribbon-tabs > span {
	flex: none;
}

.ribbon-tabs .home {
	box-sizing: border-box;
	align-self: flex-end;
	width: 52px;
	height: 19px;
	margin-right: 10px;
	padding-left: 9px;
	background: #3b4453;
	color: #eef0f2;
	font-size: 11.5px;
	line-height: 18px;
}

.ribbon-tabs .caret {
	margin-left: 3px;
}

.ribbon {
	flex: none;
	display: flex;
	height: 91px;
	background: #3b4453;
	color: #e2e5e8;
}

.panel {
	flex: none;
	display: flex;
	flex-direction: column;
	box-sizing: border-box;
	border-right: 2px solid #2d3541;
}

.body {
	display: flex;
	height: 74px;
	padding-top: 3px;
	box-sizing: border-box;
}

.panel footer {
	display: flex;
	align-items: center;
	justify-content: center;
	gap: 6px;
	height: 17px;
}

.big {
	flex: none;
	display: flex;
	flex-direction: column;
	align-items: center;
	text-align: center;
	line-height: 15px;
}

.big span {
	margin-top: 1px;
}

.big .caret {
	margin-top: 4px;
}

.small-col {
	display: flex;
	flex-direction: column;
}

.small {
	display: flex;
	align-items: center;
	height: 23px;
}

.small .cell {
	width: 18px;
}

.small .caret {
	margin-left: 8px;
}

.draw {
	width: 221px;
}

.draw .small-col {
	margin-left: 3px;
}

.modify {
	width: 133px;
}

.tools {
	flex-direction: column;
	padding-left: 4px;
}

.row {
	display: flex;
	align-items: center;
	height: 23px;
}

.row .cell {
	width: 18px;
	margin-right: 11.5px;
}

.row .caret {
	margin-left: -5px;
	margin-right: 12px;
}

.annotation {
	width: 147px;
}

.text-tool {
	width: 45px;
}

.dim-tool {
	width: 60px;
}

.annotation .small-col {
	margin-left: 5px;
}

.annotation .small .caret {
	margin-left: 7px;
}

.layers {
	width: 272px;
}

.layer-tool {
	width: 59px;
}

.layer-side {
	margin-left: 3px;
}

.layer-select {
	display: flex;
	align-items: center;
	box-sizing: border-box;
	gap: 5px;
	width: 207px;
	height: 20px;
	margin-top: 1px;
	margin-bottom: 2px;
	padding-left: 5px;
	border: 1px solid #2d3643;
	background: #4a566a;
}

.layer-select .caret {
	margin-left: auto;
	margin-right: 1px;
}

.layer-row {
	display: flex;
	height: 23px;
}

.layer-row .cell {
	width: 24px;
}

.block {
	width: 80px;
}

.insert-tool {
	width: 42px;
}

.block .small-col {
	margin-left: 2px;
}

.folded-list {
	display: flex;
	gap: 2.5px;
	padding: 2px 0 1px 1px;
}

.folded {
	display: flex;
	flex-direction: column;
	align-items: center;
	box-sizing: border-box;
	width: 58.3px;
	padding: 1px 0 4px;
	background: #4c5a6e;
	box-shadow: 0 0 0 1px #2f3744;
	font-size: 11px;
	line-height: 15px;
}

.folded .caret {
	margin-top: auto;
}

.brand {
	margin-left: auto;
}

.brand-name {
	font: italic 700 9px "DejaVu Sans", sans-serif;
	fill: #979ca5;
}

.brand-sub {
	font: 700 6px "DejaVu Sans", sans-serif;
	fill: #858b95;
}

.file-tabs {
	flex: none;
	display: flex;
	align-items: flex-end;
	box-sizing: border-box;
	height: 27px;
	padding-left: 14px;
	border-bottom: 2px solid #3b4453;
	background: #222933;
}

.file-tab {
	box-sizing: border-box;
	display: flex;
	align-items: center;
	height: 22px;
}

.start {
	width: 129px;
	padding-left: 15px;
	background: #2f3744;
	clip-path: path("M0 22 C5 20 4 1 12 0 H117 C125 1 124 20 129 22 Z");
}

.current {
	justify-content: space-between;
	width: 129px;
	margin-left: -3px;
	padding: 0 17px 0 13px;
	background: #3b4453;
	color: #f5f6f7;
	clip-path: path("M0 22 C5 20 4 1 12 0 H113 C121 1 122 20 129 22 Z");
}

.current svg {
	opacity: 0.75;
}

.new-tab {
	width: 21px;
	height: 14px;
	margin: 0 0 3px 4px;
	border-radius: 6px 5px 4px 5px;
	background: #343d4a;
	color: #b9bdc4;
	font-size: 16px;
	line-height: 13px;
	text-align: center;
}

.model {
	width: 1276px;
	height: 444px;
}

.minor {
	stroke: #0d0e12;
}

.major {
	stroke: #1b1c21;
}

.gridline {
	stroke: #808080;
	stroke-width: 2.5;
}

.axis {
	fill: none;
	stroke: #fff;
	stroke-width: 4;
	stroke-linecap: round;
}

.coord {
	font: 12px "Liberation Sans", Arial, sans-serif;
	fill: #e8e838;
}

.viewlabel {
	font: 11.5px "Open Sans", "Noto Sans", sans-serif;
	fill: #dedede;
}

.cube-face {
	font: 700 9px "Liberation Sans", Arial, sans-serif;
	fill: #505256;
}

.wind {
	font: 700 13.5px "Liberation Sans", Arial, sans-serif;
	fill: #b6b6b6;
}

.wcs {
	font: 9.5px "Liberation Sans", Arial, sans-serif;
	fill: #4c4c58;
}

.command {
	flex: none;
	display: flex;
	height: 50px;
	box-sizing: border-box;
	border-top: 3px solid #3a4250;
	background: #2b323e;
}

.cmd-side {
	display: flex;
	flex-direction: column;
	align-items: center;
	box-sizing: border-box;
	width: 22px;
	padding: 3px 4px 0 0;
}

.cmd-x {
	margin: 6px 0 9px;
}

.cmd-main {
	flex: 1;
	font-family: "DejaVu Sans Mono", monospace;
	font-size: 14.5px;
}

.log {
	box-sizing: border-box;
	height: 26px;
	padding: 5px 0 0 3px;
	background: #c8c8c8;
	color: #0c0c0c;
	line-height: 22px;
}

.entry {
	display: flex;
	align-items: center;
	height: 20px;
	margin-top: 1px;
	padding-left: 4px;
	background: #fff;
	color: #6d6d6d;
}

.entry .caret {
	margin: 0 7px 0 2px;
	border-top-color: #555;
}

.layout-tabs {
	flex: none;
	display: flex;
	height: 18px;
	padding-left: 9px;
	background: #222933;
	color: #b6bac0;
}

.layout-tab {
	width: 65px;
	height: 17px;
	background: #303844;
	line-height: 18px;
	text-align: center;
	clip-path: path("M0 0 C5 2 4 16 11 17 H55 C61 16 61 2 65 0 Z");
}

.layout-tab.active {
	width: 58px;
	background: #3f4958;
	color: #fff;
	font-weight: 700;
	clip-path: path("M0 0 C5 2 4 16 11 17 H48 C55 16 54 2 58 0 Z");
}

.layout-tab.add {
	width: 22px;
	height: 13px;
	margin: 3px 0 0 4px;
	border-radius: 5px 4px 5px 6px;
	color: #c6cad0;
	font-size: 16px;
	line-height: 12px;
	clip-path: none;
}

.statusbar {
	flex: none;
	display: flex;
	align-items: flex-end;
	box-sizing: border-box;
	height: 25px;
	padding-left: 274px;
	padding-bottom: 1px;
	background: #222933;
	color: #eceef0;
}

.st {
	flex: none;
	box-sizing: border-box;
	display: flex;
	align-items: center;
	justify-content: space-evenly;
	height: 21.5px;
	padding-bottom: 1px;
	background: #37404e;
	font-size: 11.3px;
}

.st.on {
	background: #5a8cc2;
}

.st.first {
	padding-left: 7px;
	letter-spacing: -0.12px;
}
</style>
